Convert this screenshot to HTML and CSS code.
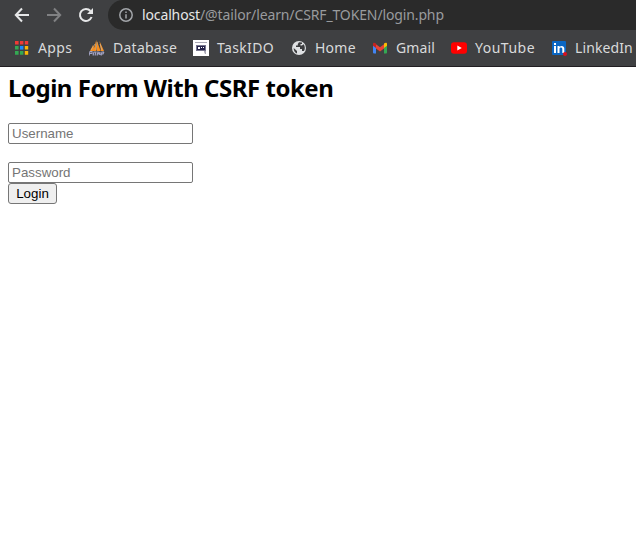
FILE: index.html
```html
<!DOCTYPE html>
<html lang="en">
<head>
<meta charset="utf-8">
<title>Login</title>
<link rel="stylesheet" href="styles.css">
</head>
<body>
<header class="browser">
  <div class="toolbar">
    <svg class="nav" viewBox="0 0 16 16"><path d="M15 8H2M8 1.5 1.8 8 8 14.5"/></svg>
    <svg class="nav disabled" viewBox="0 0 16 16"><path d="M1 8h13M8 1.5 14.2 8 8 14.5"/></svg>
    <svg class="nav" viewBox="0 0 16 16"><path d="M13.6 10A6 6 0 1 1 12.5 4"/><path class="solid" d="M15 1v6H9z"/></svg>
    <div class="address">
      <svg class="info" viewBox="0 0 14 14"><circle cx="7" cy="7" r="6.2"/><path d="M7 6.2v4.3M7 3.4v1.5"/></svg>
      <div class="url"><span class="host">localhost</span>/@tailor/learn/CSRF_TOKEN/login.php</div>
    </div>
  </div>
  <nav class="bookmarks">
    <a class="bookmark">
      <svg class="icon" viewBox="0 0 16 16"><path fill="#f03a35" d="M0 1h3.6v3.4H0zM5 1h3.4v3.4H5zM9.8 1h3.4v3.4H9.8z"/><path fill="#34a853" d="M0 6h3.6v3.6H0zM0 11h3.6v3.8H0zM5 11h3.4v3.8H5z"/><path fill="#1a8cff" d="M5 6h3.4v3.6H5z"/><path fill="#fbb605" d="M9.8 6h3.4v3.6H9.8zM9.8 11h3.4v3.8H9.8z"/></svg>
      <span class="apps">Apps</span>
    </a>
    <a class="bookmark">
      <svg class="icon" viewBox="0 0 16 16"><path fill="#f78d1d" d="M1 11 4 5l1 3 2-7v10zM7.6 11V0l4 11zM10.5 1l4.5 10h-3z"/><path fill="none" stroke="#cbb79a" stroke-width=".7" d="m2 10 4-6M7 10 8 2M11 4l2 6"/><path fill="none" stroke="#a3a3c4" stroke-width="1.1" d="M0 15.5 1 11.5h2v2H1M4 15.5 5 12h2l-1 3.5M8 15.5 9 12l1 2 1-2v3M12 14h2l1-2M12 15.5 13 12h2"/></svg>
      <span class="database">Database</span>
    </a>
    <a class="bookmark">
      <svg class="icon" viewBox="0 0 16 16"><path fill="#fff" d="M0 0h16v16H0z"/><path fill="#aaa9b5" d="M2 2h12v1H2zM11 11h2v3h-1l-1-2z"/><path fill="#77768e" d="M3 5h10v6H3z"/><path fill="#25234a" d="M4 6h8v4H4z"/><path fill="#fff" d="M5 7h2v2H5zM8 7h1v1H8zM10 7h1v1h-1z"/></svg>
      <span class="taskido">TaskIDO</span>
    </a>
    <a class="bookmark">
      <svg class="icon" viewBox="0 0 16 16"><circle cx="7" cy="8" r="7" fill="#dfe1e3"/><path fill="#3c3d3f" d="M7 2.2 5.8 4v1.5H4V7h4v2h2v2h2c1.2-1.8 1.1-5-.4-6.8L10 5.6H8.5V4H10V2.6zM1.7 8 5 11v2.5C3 12.8 1.5 10.5 1.7 8z"/></svg>
      <span class="home">Home</span>
    </a>
    <a class="bookmark">
      <svg class="icon" viewBox="0 0 16 16"><path fill="#4285f4" d="M1 4.5 4 6v7.5H2a1 1 0 0 1-1-1z"/><path fill="#34a853" d="M15 4.5 12 6v7.5h2a1 1 0 0 0 1-1z"/><path fill="#ea4335" d="M4 4.2 8 7.2l4-3V8.5l-4 3-4-3z"/><path fill="#c5221f" d="M1 5V4c0-1.5 1.5-1.8 3-.4V8L1 5.8z"/><path fill="#fbbc04" d="M15 5V4c0-1.5-1.5-1.8-3-.4V8l3-2.2z"/></svg>
      <span class="gmail">Gmail</span>
    </a>
    <a class="bookmark">
      <svg class="icon" viewBox="0 0 16 16"><rect y="2.3" width="16" height="11.4" rx="3" fill="#f00"/><path fill="#fff" d="m6.3 5.5 4.5 2.5-4.5 2.5z"/></svg>
      <span class="youtube">YouTube</span>
    </a>
    <a class="bookmark">
      <svg class="icon" viewBox="0 0 16 16"><rect y="1" width="14" height="14" rx="1" fill="#0a66c2"/><path fill="#fff" d="M2 6h2v7H2zM2 3h2v2H2zM5.5 6h2v1c1.4-1.8 4.8-1.5 4.8 1.5V13h-2V9c0-2-2.8-2-2.8 0v4h-2z"/><circle cx="13" cy="14" r="2" fill="#d9101e"/></svg>
      <span class="linkedin">LinkedIn</span>
    </a>
  </nav>
</header>
<main class="page">
  <h2>Login Form With CSRF token</h2>
  <form>
    <input class="field username" type="text" placeholder="Username">
    <input class="field" type="password" placeholder="Password">
    <button class="login" type="button">Login</button>
  </form>
</main>
</body>
</html>
```
FILE: styles.css
```css
body {
  margin: 0;
  background: #fff;
  overflow: hidden;
  font-family: "Noto Sans", sans-serif;
}
.browser {
  height: 66px;
  background: #3f4042;
  border-bottom: 1px solid #211e22;
}
.toolbar {
  display: flex;
  align-items: center;
  height: 30px;
  padding-left: 14px;
}
.nav {
  flex: none;
  width: 16px;
  height: 16px;
  margin-right: 16px;
  fill: none;
  stroke: #e6e7e8;
  stroke-width: 2;
}
.nav.disabled { stroke: #808183; }
.nav .solid { fill: #e6e7e8; stroke: none; }
.address {
  display: flex;
  flex: 1;
  align-items: center;
  height: 30px;
  margin-left: -2px;
  padding-left: 11px;
  border-radius: 15px 0 0 15px;
  background: #2a2a2a;
}
.info {
  width: 14px;
  height: 14px;
  margin-right: 9px;
  fill: none;
  stroke: #a2a5a9;
  stroke-width: 1.5;
}
.url {
  color: #999b9e;
  font-size: 14px;
  line-height: 20px;
  letter-spacing: -.13px;
  white-space: nowrap;
}
.host { color: #e6e7e8; }
.bookmarks {
  display: grid;
  grid-template-columns: 74px 104px 99px 80px 79px 101px 84px;
  height: 36px;
  padding-left: 15px;
}
.bookmark {
  display: flex;
  align-items: center;
  gap: 8px;
  color: #d9dadb;
  font-size: 14px;
  white-space: nowrap;
}
.bookmark:last-child { gap: 7px; }
.bookmark:first-child { gap: 7px; }
.bookmark span { line-height: 20px; }
.apps { letter-spacing: .35px; }
.database { letter-spacing: .25px; }
.taskido { letter-spacing: .35px; }
.home { margin-left: -1px; letter-spacing: .25px; }
.gmail { letter-spacing: .15px; }
.youtube { letter-spacing: .5px; }
.linkedin { letter-spacing: .1px; }
.icon { flex: none; width: 16px; height: 16px; }
.page { padding: 5px 8px; }
h2 {
  margin: 0 0 19px;
  font-size: 24px;
  line-height: 32px;
  letter-spacing: -.48px;
  white-space: nowrap;
}
form {
  display: flex;
  flex-direction: column;
  align-items: flex-start;
}
.field, .login {
  box-sizing: border-box;
  height: 21px;
  margin: 0;
  font: 13.333px "Liberation Sans", sans-serif;
}
.field {
  width: 185px;
  padding: 1px 3px;
  border: 1px solid #767676;
  border-radius: 2px;
}
.field::placeholder { color: #757575; }
.username { margin-bottom: 18px; }
.login {
  width: 49px;
  padding: 1px 6px;
  border: 1px solid #767676;
  border-radius: 3px;
  background: #efefef;
  color: #000;
}
```
